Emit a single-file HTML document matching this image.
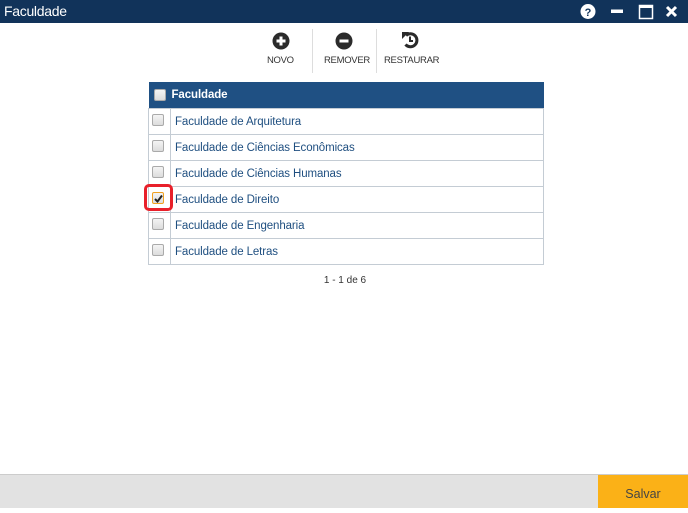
<!DOCTYPE html>
<html><head><meta charset="utf-8"><style>
*{margin:0;padding:0;box-sizing:border-box}
body{width:688px;height:508px;position:relative;background:#fff;font-family:"Liberation Sans",sans-serif;overflow:hidden}
.title{position:absolute;left:0;top:0;width:688px;height:23px;background:#11335a;color:#fff;font-size:14px;line-height:22px;padding-left:4px;letter-spacing:-0.3px}
.tb{position:absolute;top:55px;font-size:9.5px;color:#333;text-align:center;letter-spacing:-0.3px}
.sep{position:absolute;top:29px;width:1px;height:44px;background:#ddd}
table{position:absolute;left:148px;top:82px;width:396px;border-collapse:collapse;font-size:11.5px;letter-spacing:-0.1px}
th{background:#1f5083;color:#fff;height:26px;text-align:left;font-weight:bold;padding-left:4px}
td{border:1px solid #c4ccd4;height:26px;color:#1f4f80;padding-left:4px;padding-top:2px}
td.c{width:22px;padding:0 0 0 3px;vertical-align:top}
.cb{display:inline-block;width:12px;height:12px;border:1px solid #aaa;border-radius:2px;background:linear-gradient(#f4f4f4,#dcdcdc);vertical-align:middle}
td.c .cb{margin-top:5px}
.foot{position:absolute;left:0;top:474px;width:688px;height:34px;background:#e2e2e2;border-top:1px solid #ccc}
.save{position:absolute;left:598px;top:475px;width:90px;height:33px;background:#fbb117;color:#444;font-size:12.5px;text-align:center;line-height:38px}
</style></head><body>
<div class="title">Faculdade</div>
<svg style="position:absolute;left:580px;top:3px" width="108" height="17">
<circle cx="8" cy="8.5" r="7.5" fill="#fff"/><text x="8" y="13" font-size="11" font-weight="bold" text-anchor="middle" fill="#11335a" font-family="Liberation Sans">?</text>
<rect x="31" y="6.5" width="12" height="3.5" fill="#fff"/>
<rect x="59.5" y="2.5" width="13" height="13" fill="none" stroke="#fff" stroke-width="1.5"/><rect x="59" y="2" width="14" height="3" fill="#fff"/>
<path d="M87 4 L96 13 M96 4 L87 13" stroke="#fff" stroke-width="3"/>
</svg>
<svg style="position:absolute;left:272px;top:32px" width="18" height="18"><circle cx="9" cy="9" r="8.5" fill="#2b2b2b"/><path d="M9 4.5v9M4.5 9h9" stroke="#fff" stroke-width="3"/></svg>
<div class="tb" style="left:267px">NOVO</div>
<div class="sep" style="left:312px"></div>
<svg style="position:absolute;left:335px;top:32px" width="18" height="18"><circle cx="9" cy="9" r="8.5" fill="#2b2b2b"/><path d="M4.5 9h9" stroke="#fff" stroke-width="3"/></svg>
<div class="tb" style="left:324px">REMOVER</div>
<div class="sep" style="left:376px"></div>
<svg style="position:absolute;left:401px;top:31px" width="18" height="18"><path d="M5 4.5 A6.5 6.5 0 1 1 4.5 13.5" fill="none" stroke="#2b2b2b" stroke-width="3"/><path d="M1 1 L8 1 L1 8Z" fill="#2b2b2b"/><path d="M9 5.5v4.5h3" fill="none" stroke="#2b2b2b" stroke-width="2"/></svg>
<div class="tb" style="left:384px">RESTAURAR</div>
<table>
<tr><th colspan="2" style="padding-left:5px"><span class="cb" style="margin-right:6px"></span>Faculdade</th></tr>
<tr><td class="c"><span class="cb"></span></td><td>Faculdade de Arquitetura</td></tr>
<tr><td class="c"><span class="cb"></span></td><td>Faculdade de Ciências Econômicas</td></tr>
<tr><td class="c"><span class="cb"></span></td><td>Faculdade de Ciências Humanas</td></tr>
<tr><td class="c"><span class="cb" style="border-color:#f0a020;position:relative"><svg style="position:absolute;left:1px;top:1px" width="9" height="9"><path d="M1 5l2.5 2.5L8 1.5" fill="none" stroke="#222" stroke-width="2"/></svg></span></td><td>Faculdade de Direito</td></tr>
<tr><td class="c"><span class="cb"></span></td><td>Faculdade de Engenharia</td></tr>
<tr><td class="c"><span class="cb"></span></td><td>Faculdade de Letras</td></tr>
</table>
<div style="position:absolute;left:144px;top:184px;width:29px;height:27px;border:3px solid #e8202a;border-radius:5px"></div>
<div style="position:absolute;left:0;width:688px;top:275px;text-align:center;font-size:10px;color:#333;padding-left:2px">1 - 1 de 6</div>
<div class="foot"></div>
<div class="save">Salvar</div>
</body></html>
